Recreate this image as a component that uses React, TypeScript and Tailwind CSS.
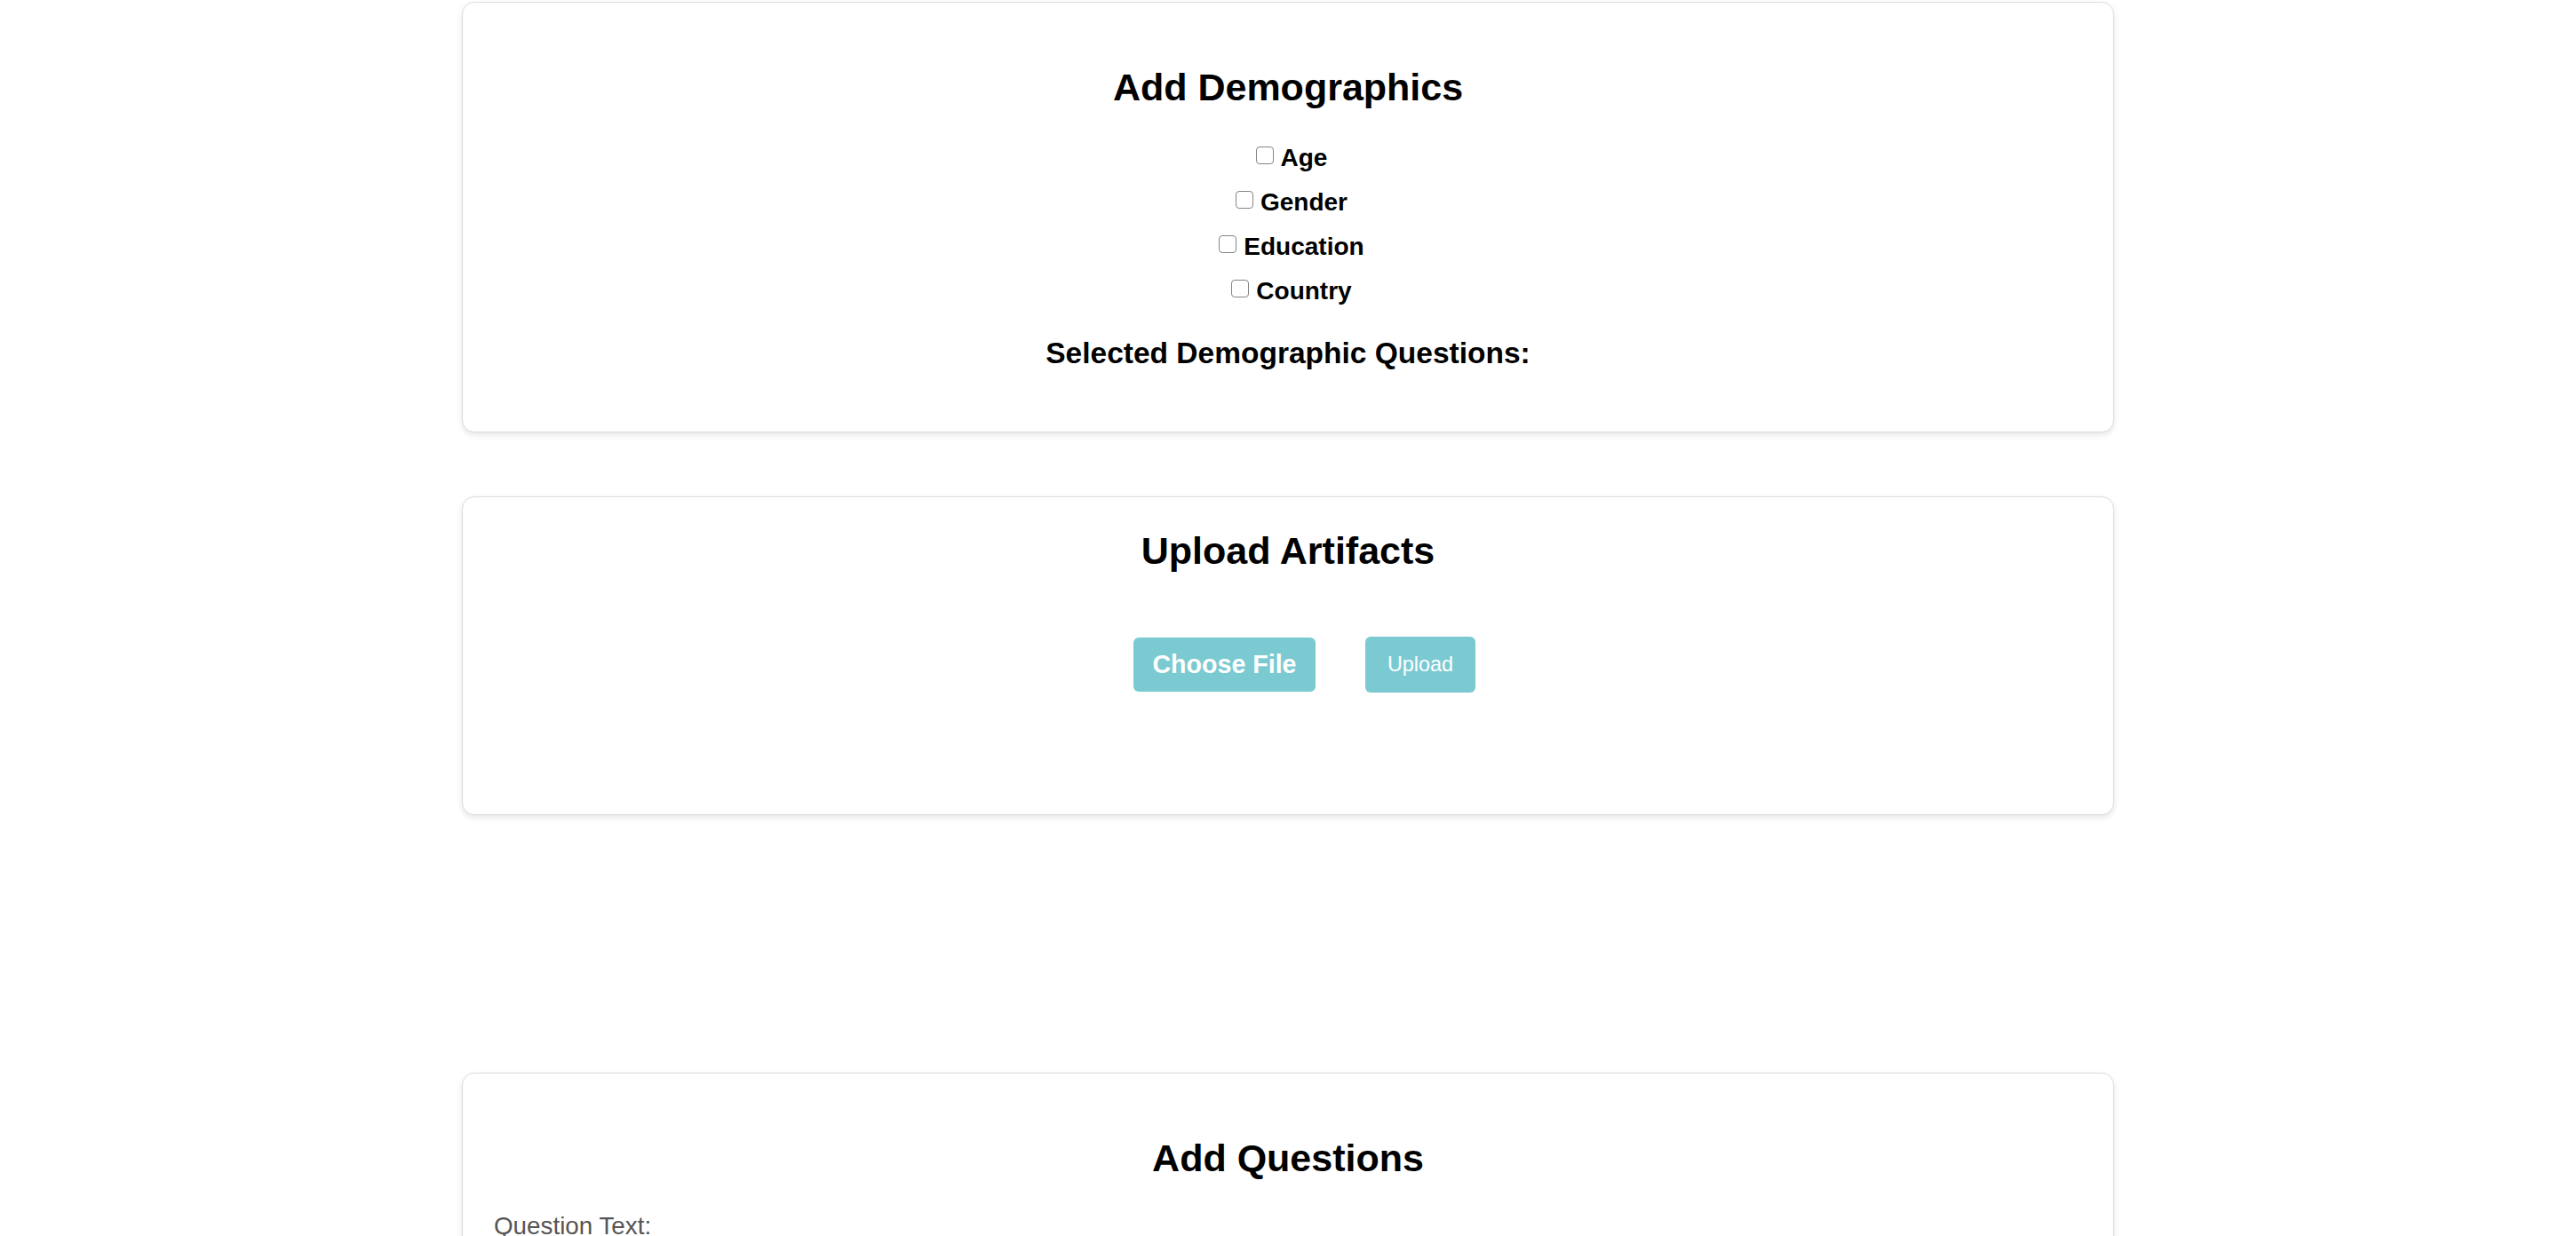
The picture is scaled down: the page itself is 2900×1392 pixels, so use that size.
import { useState } from "react";

const demographicOptions = ["Age", "Gender", "Education", "Country"];

const Card = ({ className, children }: { className: string; children: React.ReactNode }) => (
  <div
    className={`w-[1860px] mx-auto bg-white border border-[#dcdcdc] rounded-[14px] shadow-[0_3px_6px_rgba(0,0,0,0.1)] ${className}`}
  >
    {children}
  </div>
);

const App = () => {
  const [selected, setSelected] = useState<string[]>([]);

  const toggle = (name: string) => {
    if (selected.includes(name)) {
      setSelected(selected.filter((s) => s != name));
    } else {
      setSelected([...selected, name]);
    }
  };

  return (
    <div className="min-h-screen bg-white text-black font-['Liberation_Sans',Arial,sans-serif] pt-[2px]">
      <Card className="pt-[71px] pb-[69px]">
        <h2 className="text-center font-bold text-[43px] leading-[49px]">Add Demographics</h2>
        <div className="mt-[30px] pl-[8px] flex flex-col items-center">
          {demographicOptions.map((opt) => (
            <label
              key={opt}
              className="h-[50px] flex items-center gap-[8px] cursor-pointer"
              onClick={() => toggle(opt)}
            >
              <span
                className={`w-[20px] h-[20px] -mt-[6px] rounded-[4px] border-[1.5px] border-[#858585] ${
                  selected.includes(opt) ? "bg-[#0075ff] border-[#0075ff]" : "bg-white"
                }`}
              ></span>
              <span className="font-bold text-[28px] leading-[32px]">{opt}</span>
            </label>
          ))}
        </div>
        <h3 className="mt-[26px] text-center font-bold text-[33.5px] leading-[38px]">
          Selected Demographic Questions:
        </h3>
      </Card>

      <Card className="mt-[72px] pt-[36px] pb-[137px]">
        <h2 className="text-center font-bold text-[43px] leading-[49px]">Upload Artifacts</h2>
        <div className="mt-[72px] flex items-center justify-center gap-[56px] pl-[37px]">
          <button className="w-[205px] h-[61px] rounded-[6px] bg-[#7bcad2] text-white font-bold text-[28.6px]">
            Choose File
          </button>
          <button className="w-[124px] h-[63px] rounded-[6px] bg-[#7bcad2] text-white text-[23.4px]">
            Upload
          </button>
        </div>
      </Card>

      <Card className="mt-[290px] pt-[71px] pb-[60px] px-[35px]">
        <h2 className="text-center font-bold text-[43px] leading-[49px]">Add Questions</h2>
        <div className="mt-[36px]">
          <label className="block text-[#555] text-[27.8px] leading-[32px]">Question Text:</label>
          <input
            type="text"
            className="mt-[12px] w-full h-[60px] border border-[#ccc] rounded-[6px] px-[14px] text-[26px]"
          />
        </div>
      </Card>
    </div>
  );
};

export default App;
